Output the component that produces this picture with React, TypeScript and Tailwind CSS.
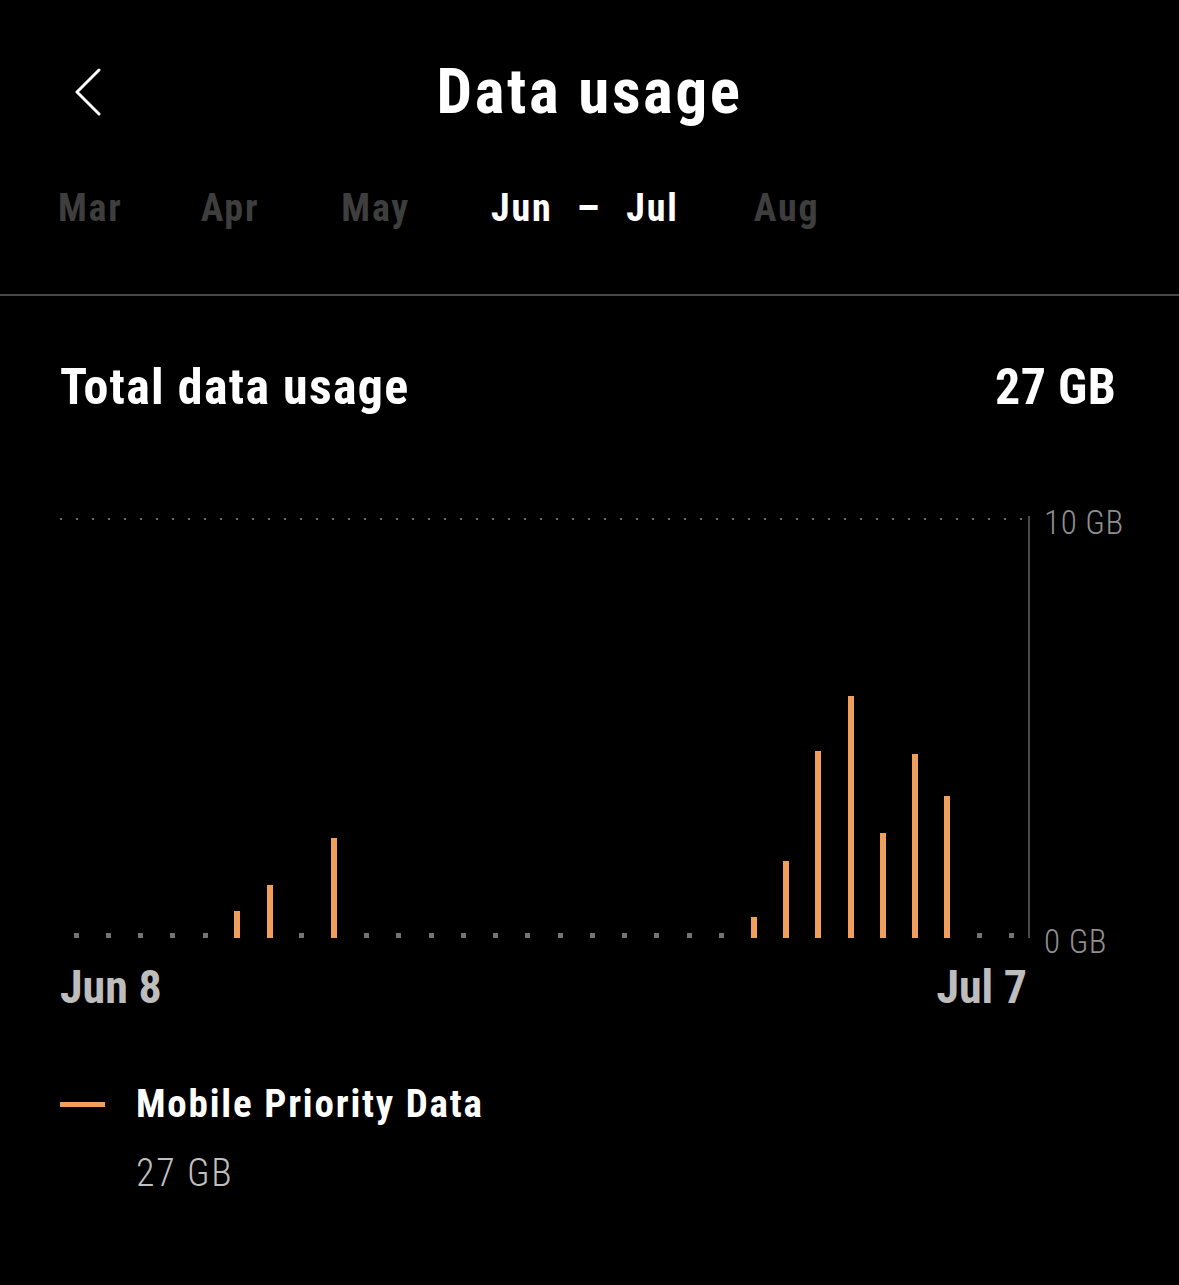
const days = [
  0, 0, 0, 0, 0, 27, 53, 0, 100, 0, 0, 0, 0, 0, 0, 0, 0, 0, 0, 0, 0, 21, 77, 187, 242, 105, 184, 142, 0, 0,
];

function BackIcon() {
  return (
    <svg width="30" height="48" viewBox="0 0 30 48" fill="none">
      <path d="M26 2 L4 24 L26 46" stroke="#ffffff" strokeWidth="3" strokeLinecap="round" strokeLinejoin="round" />
    </svg>
  );
}

export default function App() {
  return (
    <div className="min-h-screen bg-black font-['Roboto_Condensed',Roboto,sans-serif] text-white">
      {/* header */}
      <div className="grid h-[182px] grid-cols-[1fr_auto_1fr] items-center">
        <div className="pl-[73px] pt-[1px]">
          <BackIcon />
        </div>
        <h1 className="text-[63px] leading-none font-bold tracking-[2.6px]">Data usage</h1>
        <div />
      </div>

      {/* months */}
      <div className="flex h-[52px] items-center pl-[58px] text-[38px] leading-none font-bold tracking-[1.8px] text-[#3e3e3e]">
        <span>Mar</span>
        <span className="ml-[78px]">Apr</span>
        <span className="ml-[82px]">May</span>
        <div className="ml-[81px] flex items-center text-white">
          <span>Jun</span>
          <span className="ml-[24px] text-[42px]">–</span>
          <span className="ml-[25px]">Jul</span>
        </div>
        <span className="ml-[75px]">Aug</span>
      </div>

      <div className="mt-[60px] h-[2px] bg-[#474747]" />

      {/* total */}
      <div className="mt-[66px] flex h-[50px] items-center justify-between pr-[63px] pl-[60px] text-[50px] leading-none font-bold">
        <span className="tracking-[1.3px]">Total data usage</span>
        <span className="tracking-[0.3px]">27 GB</span>
      </div>

      {/* chart */}
      <div className="mt-[106px] grid grid-cols-[968px_2px_1fr] pl-[60px]">
        <div className="flex h-[420px] flex-col">
          <div className="h-[2px] w-[962px] bg-[linear-gradient(to_right,#6a6a6a_2px,transparent_2px)] bg-[length:16px_2px]" />
          <div className="flex flex-1 items-end">
            {days.map((h, i) => (
              <div key={i} className="flex flex-1 justify-center">
                {h > 0 ? (
                  <div className="w-[6px] bg-[#f0a05c]" style={{ height: h }} />
                ) : (
                  <div className="h-[5px] w-[5px] bg-[#747474]" />
                )}
              </div>
            ))}
          </div>
        </div>
        <div className="mt-[-2px] bg-[#4a4a4a]" />
        <div className="-mt-[12px] -mb-[20px] flex flex-col justify-between pl-[14px] text-[33px] leading-none font-light tracking-[0.6px] text-[#8f8f8f]">
          <span>10 GB</span>
          <span>0 GB</span>
        </div>
      </div>

      <div className="mt-[26px] flex w-[1027px] justify-between pl-[60px] text-[46px] leading-none font-bold text-[#bdbdbd]">
        <span>Jun 8</span>
        <span>Jul 7</span>
      </div>

      {/* legend */}
      <div className="mt-[74px] flex h-[40px] items-center pl-[60px]">
        <div className="h-[5px] w-[45px] bg-[#f0a05c]" />
        <span className="ml-[31px] text-[39px] leading-none font-bold tracking-[1.8px]">Mobile Priority Data</span>
      </div>
      <div className="mt-[30px] pl-[136px] text-[38px] leading-none font-light tracking-[1.8px] text-[#bfbfbf]">
        27 GB
      </div>
    </div>
  );
}
